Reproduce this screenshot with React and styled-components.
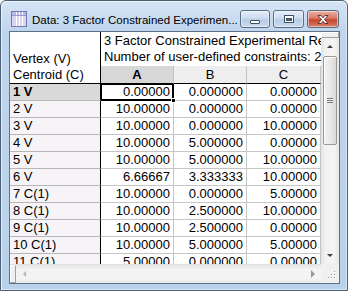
import React from "react";
import styled, { createGlobalStyle, css } from "styled-components";

const GlobalStyle = createGlobalStyle`
  html, body {
    margin: 0;
    padding: 0;
    background: #ffffff;
  }
  body {
    font-family: "Liberation Sans", Arial, sans-serif;
    color: #000;
  }
`;

const rows = [
  ["1 V", "0.00000", "0.000000", "0.00000"],
  ["2 V", "10.00000", "0.000000", "0.00000"],
  ["3 V", "10.00000", "0.000000", "10.00000"],
  ["4 V", "10.00000", "5.000000", "0.00000"],
  ["5 V", "10.00000", "5.000000", "10.00000"],
  ["6 V", "6.66667", "3.333333", "10.00000"],
  ["7 C(1)", "10.00000", "0.000000", "5.00000"],
  ["8 C(1)", "10.00000", "2.500000", "10.00000"],
  ["9 C(1)", "10.00000", "2.500000", "0.00000"],
  ["10 C(1)", "10.00000", "5.000000", "5.00000"],
  ["11 C(1)", "5.00000", "0.000000", "0.00000"],
];

const Frame = styled.div`
  width: 348px;
  height: 291px;
  box-sizing: border-box;
  border: 1px solid #4b5e73;
  border-radius: 6px 6px 0 0;
  background: linear-gradient(#d6e5f6, #bfd5ed 30px, #b9d1ea);
  box-shadow: inset 1px 1px 0 rgba(255, 255, 255, 0.65),
    inset -1px -1px 0 rgba(255, 255, 255, 0.45);
  display: flex;
  flex-direction: column;
  overflow: hidden;
`;

const TitleBar = styled.div`
  height: 30px;
  box-sizing: border-box;
  padding: 6px 8px 0 10px;
  display: flex;
  align-items: center;
`;

const Title = styled.div`
  flex: 1;
  margin-left: 5px;
  padding-top: 1px;
  font-size: 11.5px;
  white-space: nowrap;
  overflow: hidden;
`;

const CaptionButtons = styled.div`
  display: flex;
  gap: 3px;
`;

const CaptionButton = styled.div`
  width: ${(p) => p.$w}px;
  height: 18px;
  box-sizing: border-box;
  border: 1px solid #5a6b80;
  border-radius: 3px;
  display: flex;
  align-items: center;
  justify-content: center;
  box-shadow: inset 0 0 0 1px rgba(255, 255, 255, 0.5);
  background: ${(p) =>
    p.$close
      ? "linear-gradient(#eab0a2, #d97a66 45%, #c5452f 55%, #d77e66)"
      : "linear-gradient(#e4edf8, #cddcef 45%, #b7cce5 55%, #c9dbef)"};
`;

const Client = styled.div`
  flex: 1;
  margin: 0 7px 6px 8px;
  border: 1px solid #5e7186;
  background: #ffffff;
  display: grid;
  grid-template-columns: 311px 18px;
  grid-template-rows: 232px 19px;
`;

const Sheet = styled.div`
  overflow: hidden;
  display: grid;
  grid-template-columns: 91px 73px 73px 74px;
  grid-template-rows: 34px 18px;
  grid-auto-rows: 17px;
  font-size: 13px;
  line-height: 16px;
`;

const Corner = styled.div`
  grid-row: 1 / span 2;
  border-right: 1px solid #000;
  border-bottom: 1px solid #000;
  display: flex;
  flex-direction: column;
  justify-content: flex-end;
  padding-left: 3px;
  white-space: nowrap;
`;

const SheetTitle = styled.div`
  grid-column: 2 / span 3;
  padding: 1px 0 0 3px;
  white-space: nowrap;
  overflow: hidden;
`;

const ColHead = styled.div`
  box-sizing: border-box;
  border-right: 1px solid #c4c4c4;
  border-bottom: 1px solid #000;
  background: ${(p) => (p.$active ? "#d7d7d7" : "#eeeeee")};
  font-weight: ${(p) => (p.$active ? 700 : 400)};
  text-align: center;
  line-height: 17px;
`;

const RowHead = styled.div`
  box-sizing: border-box;
  border-right: 1px solid #000;
  border-bottom: 1px solid #b6b6b6;
  background: ${(p) => (p.$active ? "#d9d9d9" : "#f7f4f8")};
  font-weight: ${(p) => (p.$active ? 700 : 400)};
  padding-left: 3px;
  white-space: nowrap;
`;

const Cell = styled.div`
  box-sizing: border-box;
  border-right: 1px solid #c6c6c6;
  border-bottom: 1px solid #c6c6c6;
  padding-right: 3px;
  text-align: right;
  white-space: nowrap;
  ${(p) =>
    p.$active &&
    css`
      position: relative;
      &::after {
        content: "";
        position: absolute;
        left: 0;
        top: 0;
        right: -1px;
        bottom: -1px;
        border: 1px solid #000;
        border-right-width: 2px;
        border-bottom-width: 2px;
      }
      &::before {
        content: "";
        position: absolute;
        right: -3px;
        bottom: -3px;
        width: 5px;
        height: 5px;
        background: #000;
        border: 1px solid #fff;
        box-sizing: border-box;
        z-index: 1;
      }
    `}
`;

const VScroll = styled.div`
  display: flex;
  flex-direction: column;
  background: linear-gradient(90deg, #e3e3e3, #f2f2f2 25%, #f4f4f4 75%, #e6e6e6);
`;

const SplitBox = styled.div`
  flex: none;
  box-sizing: border-box;
  background: #f0f0f0;
  border: 1px solid #ffffff;
  border-right-color: #a0a0a0;
  border-bottom-color: #a0a0a0;
  ${(p) => (p.$horizontal ? "width: 6px;" : "height: 6px;")}
`;

const ArrowButton = styled.div`
  flex: none;
  width: ${(p) => (p.$horizontal ? "17px" : "auto")};
  height: ${(p) => (p.$horizontal ? "auto" : "17px")};
  display: flex;
  align-items: center;
  justify-content: center;
`;

const Arrow = styled.div`
  width: 0;
  height: 0;
  border: 3px solid transparent;
  ${(p) => p.$dir === "up" && `border-bottom: 3px solid ${p.$color}; border-top-width: 0; border-left-width: 3px;`}
  ${(p) => p.$dir === "down" && `border-top: 3px solid ${p.$color}; border-bottom-width: 0;`}
  ${(p) => p.$dir === "left" && `border-right: 3px solid ${p.$color}; border-left-width: 0;`}
  ${(p) => p.$dir === "right" && `border-left: 4px solid ${p.$color}; border-right-width: 0; border-top-width: 4px; border-bottom-width: 4px;`}
`;

const Thumb = styled.div`
  flex: none;
  height: 89px;
  margin: 1px 2px 0 2px;
  box-sizing: border-box;
  border: 1px solid #999999;
  border-radius: 2px;
  background: linear-gradient(90deg, #f3f3f3, #e9e9e9 50%, #d9d9d9);
  box-shadow: inset 1px 1px 0 #ffffff;
  display: flex;
  align-items: center;
  justify-content: center;
`;

const Grip = styled.div`
  width: 6px;
  height: 5px;
  background: repeating-linear-gradient(#777 0 1px, #f4f4f4 1px 2px);
`;

const Track = styled.div`
  flex: 1;
`;

const HScroll = styled.div`
  display: flex;
  background: linear-gradient(#e6e6e6, #f3f3f3 25%, #f4f4f4 75%, #e9e9e9);
  border-top: 1px solid #e0e0e0;
`;

const SizeGrip = styled.div`
  background: #f0f0f0;
  display: flex;
  align-items: flex-end;
  justify-content: flex-end;
  padding: 0 3px 4px 0;
`;

const AppIcon = () => (
  <svg width="16" height="16" viewBox="0 0 16 16">
    <rect x="0.5" y="0.5" width="15" height="15" fill="#d6d6ef" stroke="#7676b8" />
    <rect x="1" y="1" width="14" height="3" fill="#b9b9e0" />
    <path d="M5.5 1v14M8.5 1v14M11.5 1v14" stroke="#ffffff" strokeWidth="1" />
    <path d="M1 4.5h14" stroke="#9a9ad0" />
  </svg>
);

const MinGlyph = () => (
  <svg width="12" height="12" viewBox="0 0 12 12">
    <rect x="1.5" y="7.5" width="9" height="3" rx="0.5" fill="#ffffff" stroke="#3e4e62" />
  </svg>
);

const MaxGlyph = () => (
  <svg width="12" height="12" viewBox="0 0 12 12">
    <rect x="1.5" y="2.5" width="9" height="7" fill="#ffffff" stroke="#3e4e62" />
    <rect x="3.5" y="5.5" width="5" height="2" fill="#56677b" stroke="#3e4e62" />
  </svg>
);

const CloseGlyph = () => (
  <svg width="14" height="11" viewBox="0 0 14 11">
    <path
      d="M2 1.5h3l2 2.2 2-2.2h3l-3.5 4 3.5 4h-3l-2-2.2-2 2.2h-3l3.5-4z"
      fill="#ffffff"
      stroke="#4a2a26"
      strokeWidth="0.9"
      strokeLinejoin="round"
    />
  </svg>
);

const GripDots = () => (
  <svg width="10" height="10" viewBox="0 0 10 10">
    {[
      [8, 2],
      [5, 5],
      [8, 5],
      [2, 8],
      [5, 8],
      [8, 8],
    ].map(([x, y]) => (
      <g key={`${x}-${y}`}>
        <rect x={x + 1} y={y + 1} width="1" height="1" fill="#ffffff" />
        <rect x={x} y={y} width="1" height="1" fill="#9a9a9a" />
      </g>
    ))}
  </svg>
);

const App = () => {
  return (
    <>
      <GlobalStyle />
      <Frame>
        <TitleBar>
          <AppIcon />
          <Title>Data: 3 Factor Constrained Experimen...</Title>
          <CaptionButtons>
            <CaptionButton $w={30}>
              <MinGlyph />
            </CaptionButton>
            <CaptionButton $w={31}>
              <MaxGlyph />
            </CaptionButton>
            <CaptionButton $w={32} $close>
              <CloseGlyph />
            </CaptionButton>
          </CaptionButtons>
        </TitleBar>
        <Client>
          <Sheet>
            <Corner>
              <span>Vertex (V)</span>
              <span>Centroid (C)</span>
            </Corner>
            <SheetTitle>
              <div>3 Factor Constrained Experimental Region</div>
              <div>Number of user-defined constraints: 2</div>
            </SheetTitle>
            <ColHead $active>A</ColHead>
            <ColHead>B</ColHead>
            <ColHead>C</ColHead>
            {rows.map(([label, a, b, c], i) => (
              <React.Fragment key={label}>
                <RowHead $active={i === 0}>{label}</RowHead>
                <Cell $active={i === 0}>{a}</Cell>
                <Cell>{b}</Cell>
                <Cell>{c}</Cell>
              </React.Fragment>
            ))}
          </Sheet>
          <VScroll>
            <SplitBox />
            <ArrowButton>
              <Arrow $dir="up" $color="#404040" />
            </ArrowButton>
            <Thumb>
              <Grip />
            </Thumb>
            <Track />
            <ArrowButton>
              <Arrow $dir="down" $color="#404040" />
            </ArrowButton>
          </VScroll>
          <HScroll>
            <SplitBox $horizontal />
            <ArrowButton $horizontal>
              <Arrow $dir="left" $color="#b4b4b4" />
            </ArrowButton>
            <Track />
            <ArrowButton $horizontal>
              <Arrow $dir="right" $color="#9a9a9a" />
            </ArrowButton>
          </HScroll>
          <SizeGrip>
            <GripDots />
          </SizeGrip>
        </Client>
      </Frame>
    </>
  );
};

export default App;
